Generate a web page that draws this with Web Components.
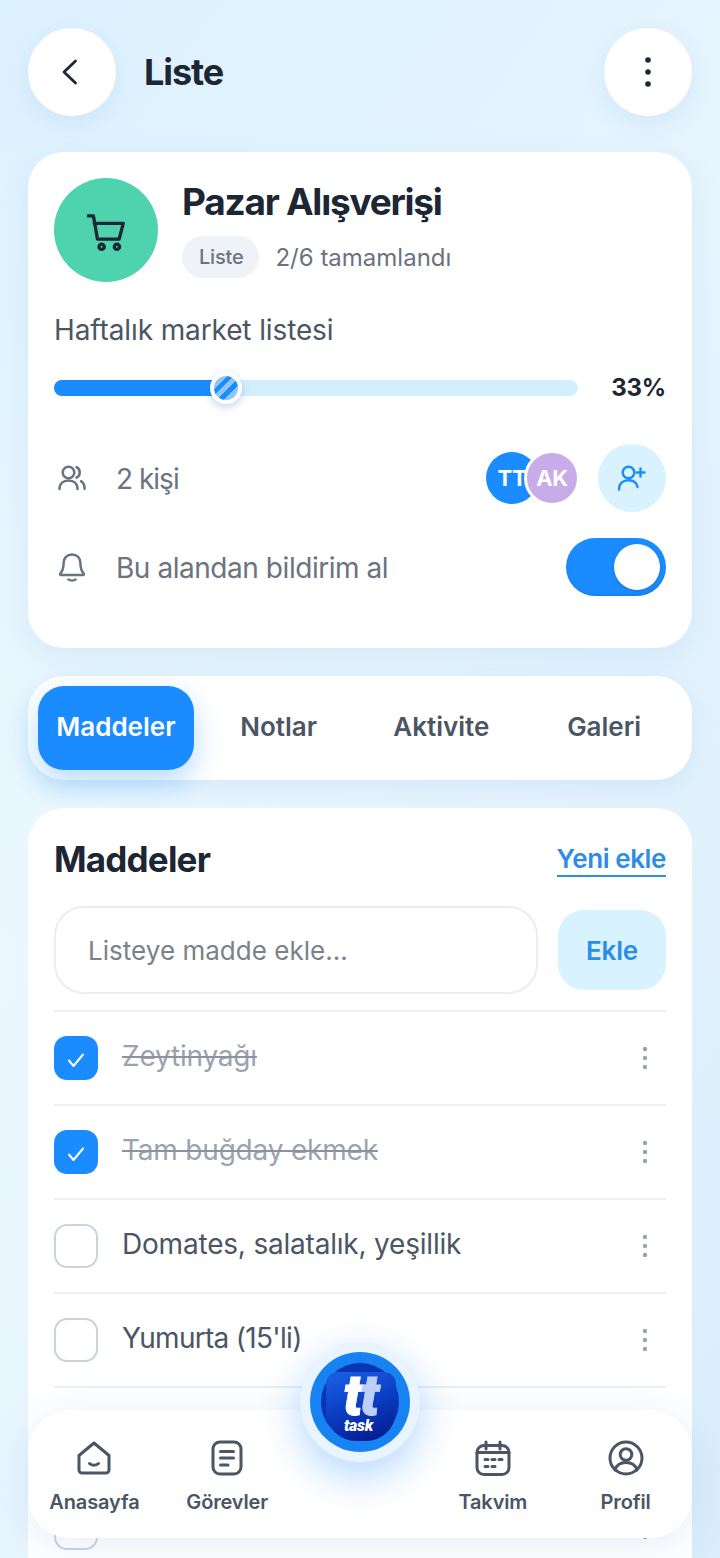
<!DOCTYPE html>
<html lang="tr">
<head>
<meta charset="utf-8">
<title>Liste</title>
<style>
  html, body { margin: 0; padding: 0; height: 1558px; overflow: hidden; }
  body { font-family: Inter, "Noto Sans", sans-serif; color: #1c2733; }
</style>
</head>
<body>
<app-screen>
  <top-bar>Liste</top-bar>
  <summary-card></summary-card>
  <tab-strip></tab-strip>
  <items-card>
    <item-row done>Zeytinyağı</item-row>
    <item-row done>Tam buğday ekmek</item-row>
    <item-row>Domates, salatalık, yeşillik</item-row>
    <item-row style="--ls:-.7px">Yumurta (15'li)</item-row>
    <item-row></item-row>
    <item-row></item-row>
  </items-card>
  <bottom-nav></bottom-nav>
</app-screen>

<script>
const ICON = 'fill="none" stroke="currentColor" stroke-linecap="round" stroke-linejoin="round"';

class AppScreen extends HTMLElement {
  constructor() {
    super();
    this.attachShadow({ mode: 'open' });
    this.shadowRoot.innerHTML = `<style>
      :host { display: flex; flex-direction: column; position: relative; box-sizing: border-box; height: 1558px; overflow: hidden; padding: 28px 28px 0;
        background: radial-gradient(420px 900px at 0% 62%, #ebf8ff 0%, rgba(235,248,255,0) 100%), linear-gradient(125deg, #dcf1fe 0%, #e7f5fe 48%, #d9edfb 100%); }
    </style><slot></slot>`;
  }
}

class TopBar extends HTMLElement {
  constructor() {
    super();
    this.attachShadow({ mode: 'open' });
    this.shadowRoot.innerHTML = `<style>
      :host { display: flex; align-items: center; height: 88px; flex: none; margin-bottom: 36px; }
      .round { width: 88px; height: 88px; border-radius: 50%; background: #fff; display: flex; align-items: center; justify-content: center; box-shadow: 0 8px 22px rgba(110,165,215,.16); flex: none; }
      .title { flex: 1; margin-left: 28px; font-size: 36px; font-weight: 700; letter-spacing: -1.1px; color: #1c2733; }
    </style>
    <div class="round"><svg width="32" height="32" viewBox="0 0 32 32" ${ICON} stroke-width="2.800" style="color:#1c2733;margin-left:-2px"><path d="M20.500 5 9 16l11.500 11"/></svg></div>
    <div class="title"><slot></slot></div>
    <div class="round"><svg width="8" height="32" viewBox="0 0 8 32" fill="#1c2733"><circle cx="4" cy="4" r="2.800"/><circle cx="4" cy="16" r="2.800"/><circle cx="4" cy="28" r="2.800"/></svg></div>`;
  }
}

class SummaryCard extends HTMLElement {
  constructor() {
    super();
    this.attachShadow({ mode: 'open' });
    this.shadowRoot.innerHTML = `<style>
      :host { display: block; flex: none; box-sizing: border-box; height: 496px; padding: 26px; background: #fff; border-radius: 36px; box-shadow: 0 10px 30px rgba(110,165,215,.14); margin-bottom: 28px; }
      .head { display: flex; gap: 24px; height: 104px; }
      .badge { width: 104px; height: 104px; border-radius: 50%; background: #4fd3ae; display: flex; align-items: center; justify-content: center; flex: none; }
      h1 { margin: 2px 0 12px; font-size: 37px; line-height: 44px; font-weight: 700; letter-spacing: -1.25px; color: #1c2733; }
      .meta { display: flex; align-items: center; gap: 16px; font-size: 24px; color: #6b7280; letter-spacing: 0; }
      .chip { height: 42px; box-sizing: border-box; padding: 0 16px 0 17px; border-radius: 21px; background: #eff2f7; font-size: 20px; font-weight: 500; display: flex; align-items: center; letter-spacing: -.2px; }
      .desc { margin-top: 30px; font-size: 28px; line-height: 36px; color: #4b5563; letter-spacing: -.12px; }
      .progress { display: flex; align-items: center; margin-top: 24px; height: 32px; }
      .track { position: relative; width: 524px; height: 16px; border-radius: 8px; background: #d3effd; flex: none; }
      .fill { width: 172px; height: 16px; border-radius: 8px 0 0 8px; background: #1a8cff; }
      .thumb { position: absolute; left: 156px; top: -8px; box-sizing: border-box; width: 32px; height: 32px; border-radius: 50%; border: 4px solid #fff; box-shadow: 0 3px 8px rgba(60,110,170,.3);
        background: repeating-linear-gradient(135deg, #1a8cff 0 4.5px, #8cc6fb 4.5px 9.5px); }
      .pct { margin-left: auto; font-size: 24px; font-weight: 700; color: #1c2733; letter-spacing: -.2px; padding-bottom: 2px; }
      .row { display: flex; align-items: center; font-size: 28px; color: #6b7280; letter-spacing: -.45px; }
      .row > .txt { padding-top: 2px; }
      .people { margin-top: 40px; height: 68px; }
      .bell { margin-top: 26px; height: 58px; }
      .ic { width: 36px; margin-right: 26px; display: flex; justify-content: center; color: #6b7280; flex: none; }
      .end { margin-left: auto; display: flex; align-items: center; }
      .av { width: 52px; height: 52px; border-radius: 50%; display: flex; align-items: center; justify-content: center; color: #fff; font-size: 22px; font-weight: 700; box-sizing: border-box; letter-spacing: -.3px; }
      .tt { background: #1a8cff; }
      .ak { background: #c8ace9; margin-left: -14px; width: 56px; height: 56px; border: 3px solid #fff; margin-right: 18px; }
      .add { width: 68px; height: 68px; border-radius: 50%; background: #d8f2ff; color: #1a8cff; display: flex; align-items: center; justify-content: center; }
      .toggle { width: 100px; height: 58px; box-sizing: border-box; border-radius: 29px; background: #1a8cff; padding: 6px; display: flex; justify-content: flex-end; align-items: center; box-shadow: inset 0 -2px 2px rgba(10,90,190,.25); }
      .knob { width: 46px; height: 46px; border-radius: 50%; background: #fff; box-shadow: 0 1px 3px rgba(0,40,100,.25); }
    </style>
    <div class="head">
      <div class="badge"><svg width="39" height="39" viewBox="0 0 40 40" style="margin-top:4px;color:#1c2733" ${ICON} stroke-width="3.400"><path d="M1 3h5.600l4.100 23.700h22.300l4.200-16H7.400"/><circle cx="15" cy="34.600" r="2.700"/><circle cx="30.700" cy="34.600" r="2.700"/></svg></div>
      <div>
        <h1>Pazar Alışverişi</h1>
        <div class="meta"><span class="chip">Liste</span><span>2/6 tamamlandı</span></div>
      </div>
    </div>
    <div class="desc">Haftalık market listesi</div>
    <div class="progress">
      <div class="track"><div class="fill"></div><div class="thumb"></div></div>
      <div class="pct">33%</div>
    </div>
    <div class="row people">
      <span class="ic"><svg width="28" height="26" viewBox="0 0 28 26" ${ICON} stroke-width="2.500"><circle cx="10.500" cy="7.500" r="5.800"/><path d="M1.500 24c0-5.500 3.800-8.600 9-8.600s9 3.100 9 8.600"/><path d="M18.500 2.200a5.800 5.800 0 0 1 0 10.400"/><path d="M23 16.200c2.400 1.400 3.600 4 3.600 7.600"/></svg></span>
      <span class="txt" style="letter-spacing:-1px">2 kişi</span>
      <span class="end">
        <span class="av tt">TT</span><span class="av ak">AK</span>
        <span class="add"><svg width="30" height="26" viewBox="0 0 30 26" ${ICON} stroke-width="2.400"><circle cx="11.500" cy="7.500" r="5.800"/><path d="M2 24.500c0-6 4-9.200 9.500-9.200 3 0 5.500 1 7.200 2.700 1 1.200 1.600 2.600 1.800 4"/><path d="M23.500 3.500v8M19.500 7.500h8"/></svg></span>
      </span>
    </div>
    <div class="row bell">
      <span class="ic"><svg width="28" height="30" viewBox="0 0 28 30" ${ICON} stroke-width="2.500"><path d="M14 2.500c-5 0-8.400 3.700-8.400 8.500 0 5-1 8-3.300 10.500-.5.600-.1 1.500.7 1.500h22c.8 0 1.200-.9.700-1.500-2.300-2.500-3.300-5.500-3.300-10.500 0-4.800-3.400-8.500-8.400-8.500Z"/><path d="M10.500 27.500c1.800 1.200 5.200 1.200 7 0"/></svg></span>
      <span class="txt">Bu alandan bildirim al</span>
      <span class="end"><span class="toggle"><span class="knob"></span></span></span>
    </div>`;
  }
}

class TabStrip extends HTMLElement {
  constructor() {
    super();
    this.attachShadow({ mode: 'open' });
    const tabs = ['Maddeler', 'Notlar', 'Aktivite', 'Galeri'];
    this.shadowRoot.innerHTML = `<style>
      :host { display: grid; grid-template-columns: repeat(4, 1fr); gap: 7px; flex: none; box-sizing: border-box; height: 104px; padding: 10px; background: #fff; border-radius: 36px; box-shadow: 0 8px 24px rgba(110,165,215,.14); margin-bottom: 28px; }
      .tab { display: flex; align-items: center; justify-content: center; box-sizing: border-box; padding-bottom: 4px; font-size: 26px; font-weight: 600; color: #4b5563; border-radius: 26px; letter-spacing: 0; }
      .on { background: #1a8cff; color: #fff; box-shadow: 0 12px 28px rgba(26,140,255,.3); }
    </style>` + tabs.map((t, i) => `<div class="tab ${i === 0 ? 'on' : ''}">${t}</div>`).join('');
  }
}

class ItemsCard extends HTMLElement {
  constructor() {
    super();
    this.attachShadow({ mode: 'open' });
    this.shadowRoot.innerHTML = `<style>
      :host { display: block; flex: none; box-sizing: border-box; padding: 26px 26px 0; background: #fff; border-radius: 36px 36px 0 0; height: 760px; }
      .head { display: flex; align-items: center; justify-content: space-between; height: 52px; margin-bottom: 20px; }
      h2 { margin: 0 0 2px; font-size: 35px; font-weight: 700; color: #1c2733; letter-spacing: -.8px; }
      .link { font-size: 26px; font-weight: 600; color: #2b8de8; border-bottom: 2px solid #2b8de8; line-height: 32px; letter-spacing: -.4px; }
      .form { display: flex; align-items: center; justify-content: space-between; height: 88px; margin-bottom: 16px; }
      .input { width: 484px; height: 88px; box-sizing: border-box; border: 2px solid #e9eef3; border-radius: 30px; padding-left: 32px; display: flex; align-items: center; font-size: 26px; color: #7b8188; letter-spacing: .03px; }
      .btn { width: 108px; height: 80px; border-radius: 26px; background: #d8f2ff; color: #2b8de8; font-size: 26px; font-weight: 600; display: flex; align-items: center; justify-content: center; letter-spacing: -.2px; }
    </style>
    <div class="head"><h2>Maddeler</h2><span class="link">Yeni ekle</span></div>
    <div class="form"><div class="input">Listeye madde ekle...</div><div class="btn">Ekle</div></div>
    <slot></slot>`;
  }
}

class ItemRow extends HTMLElement {
  constructor() {
    super();
    this.attachShadow({ mode: 'open' });
    const done = this.hasAttribute('done');
    this.shadowRoot.innerHTML = `<style>
      :host { display: flex; align-items: center; box-sizing: border-box; height: 94px; border-top: 2px solid #eceff3; }
      .box { width: 44px; height: 44px; box-sizing: border-box; border-radius: 13px; border: 2px solid #c7d3de; display: flex; align-items: center; justify-content: center; flex: none; }
      :host([done]) .box { background: #1a8cff; border: 0; }
      .text { margin: 0 0 4px 24px; flex: 1; font-size: 28px; color: #4b5563; letter-spacing: var(--ls, -.2px); }
      :host([done]) .text { color: #9ca3af; text-decoration: line-through; text-decoration-color: #8b949e; text-decoration-thickness: 2px; }
      .more { width: 6px; margin-right: 18px; flex: none; display: flex; }
    </style>
    <div class="box">${done ? `<svg width="20" height="18" viewBox="0 0 20 18" ${ICON} stroke-width="2" style="color:#fff;margin-top:3px"><path d="M3 9.500 7.500 15 17 3.500"/></svg>` : ''}</div>
    <div class="text"><slot></slot></div>
    <div class="more"><svg width="6" height="24" viewBox="0 0 6 24" fill="#9aa3ad"><circle cx="3" cy="3" r="2.200"/><circle cx="3" cy="12" r="2.200"/><circle cx="3" cy="21" r="2.200"/></svg></div>`;
  }
}

class BottomNav extends HTMLElement {
  constructor() {
    super();
    this.attachShadow({ mode: 'open' });
    const svg = (w, h, body) => `<svg width="${w}" height="${h}" viewBox="0 0 ${w} ${h}" ${ICON} stroke-width="3">${body}</svg>`;
    const items = [
      ['Anasayfa', svg(36, 34, '<path d="M3 14.500 18 2l15 12.500V29a3 3 0 0 1-3 3H6a3 3 0 0 1-3-3Z"/><path d="M13.500 22.500c2.300 2.200 6.700 2.200 9 0"/>')],
      ['Görevler', svg(32, 36, '<rect x="2" y="2" width="28" height="32" rx="7"/><path d="M9.500 11.500h13M9.500 18h13M9.500 25h7.500"/>')],
      null,
      ['Takvim', svg(36, 36, '<rect x="2" y="5.500" width="32" height="29" rx="7"/><path d="M11 2v7M25 2v7M2 12.500h32"/><path d="M10 19.500h3M17 19.500h3M24 19.500h3M10 26.500h3M17 26.500h3"/>')],
      ['Profil', svg(36, 36, '<circle cx="18" cy="18" r="16"/><circle cx="18" cy="14.500" r="5.800"/><path d="M7 30c1.500-5 5.500-7.500 11-7.500S27.500 25 29 30"/>')],
    ];
    this.shadowRoot.innerHTML = `<style>
      :host { display: grid; grid-template-columns: repeat(5, 1fr); position: absolute; left: 28px; top: 1410px; width: 664px; height: 128px; background: #fff; border-radius: 42px; box-shadow: 0 6px 40px rgba(100,150,205,.16); }
      .item { display: flex; flex-direction: column; align-items: center; color: #4b5563; padding-top: 30px; }
      .icon { height: 36px; display: flex; align-items: center; justify-content: center; }
      .label { margin-top: 13px; font-size: 20px; line-height: 26px; font-weight: 600; letter-spacing: -.15px; }
      .fab { position: absolute; left: 272px; top: -68px; width: 120px; height: 120px; box-sizing: border-box; padding: 10px; border-radius: 50%; background: #e8f4ff; box-shadow: 0 14px 40px rgba(26,130,255,.32); }
      .blue { width: 100px; height: 100px; box-sizing: border-box; padding: 11px; border-radius: 50%; background: #1783f3; }
      .logo { position: relative; width: 78px; height: 78px; border-radius: 50%; background: #0735b4; display: flex; flex-direction: column; align-items: center; color: #fff; font-family: Roboto, Inter, sans-serif; font-style: italic; font-weight: 900; }
      .logo::before { content: ""; position: absolute; left: 5px; top: 9px; width: 70px; height: 69px; border-radius: 12px 12px 30px 30px; background: linear-gradient(160deg, #1a62e6 0%, #0b3cc0 50%, #04168a 100%); }
      .tt { position: relative; font-size: 58px; line-height: 46px; height: 44px; margin-top: 9px; letter-spacing: -2.500px; -webkit-text-stroke: .8px currentColor; }
      .tt b { font-weight: 900; color: #bccff7; }
      .task { position: relative; font-size: 16px; line-height: 16px; margin-top: 2px; letter-spacing: -.3px; margin-left: -3px; }
    </style>` + items.map(it => it
      ? `<div class="item"><div class="icon">${it[1]}</div><div class="label">${it[0]}</div></div>`
      : '<div></div>').join('') + `
    <div class="fab"><div class="blue"><div class="logo"><div class="tt">t<b>t</b></div><div class="task">task</div></div></div></div>`;
  }
}

customElements.define('app-screen', AppScreen);
customElements.define('top-bar', TopBar);
customElements.define('summary-card', SummaryCard);
customElements.define('tab-strip', TabStrip);
customElements.define('items-card', ItemsCard);
customElements.define('item-row', ItemRow);
customElements.define('bottom-nav', BottomNav);
</script>
</body>
</html>
